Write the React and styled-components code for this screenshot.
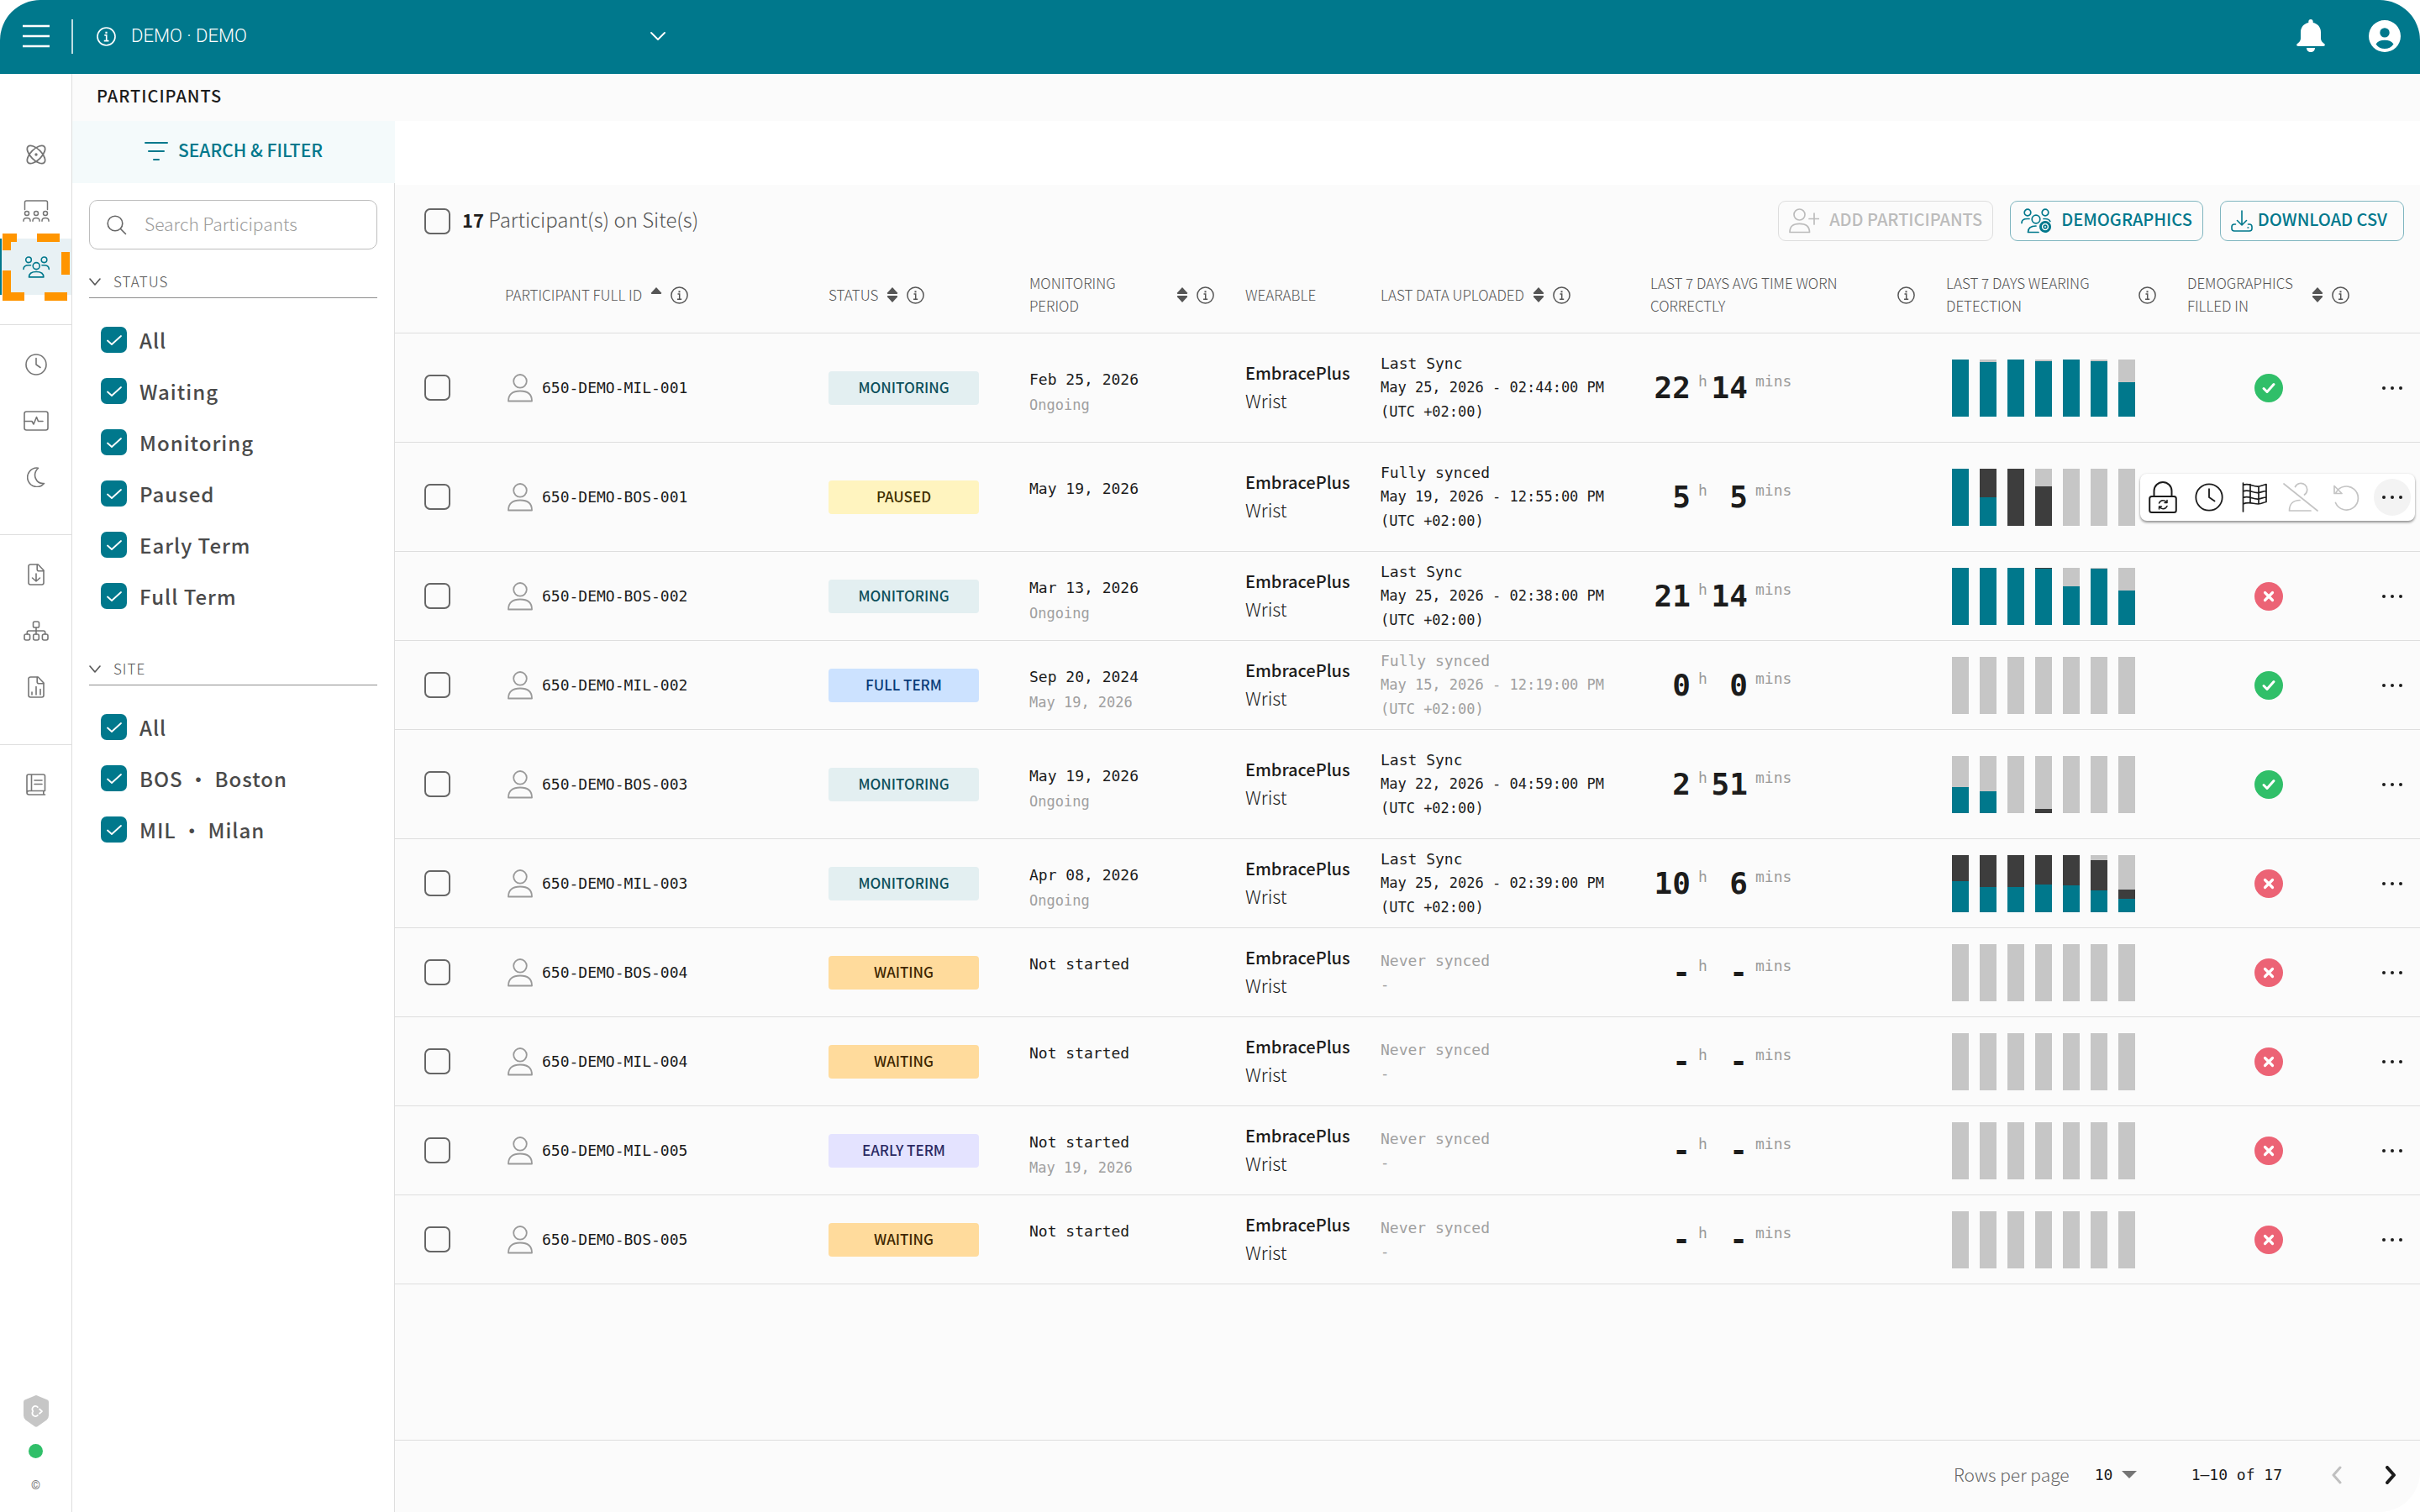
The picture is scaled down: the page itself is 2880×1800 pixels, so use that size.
import React from "react";
import styled, { createGlobalStyle } from "styled-components";

const teal = "#00788c";
const ink = "#1c1c1c";
const line = "#dedede";
const sans = `"Noto Sans CJK SC", Roboto, sans-serif`;
const mono = `"DejaVu Sans Mono", "Liberation Mono", monospace`;

const GlobalStyle = createGlobalStyle`
  *, *::before, *::after { box-sizing: border-box; }
  body { margin: 0; background: #fff; color: ${ink}; font-family: ${sans}; }
  button, select, input { font: inherit; color: inherit; margin: 0; }
  button { border: 0; padding: 0; background: none; cursor: pointer; }
  svg { display: block; flex: none; }
`;

/* ---------- icons ---------- */

const Svg = ({ w, h, sw = 2, fill = "none", children }) => (
  <svg
    width={w}
    height={h}
    viewBox={`0 0 ${w} ${h}`}
    fill={fill}
    stroke={fill === "none" ? "currentColor" : "none"}
    strokeWidth={sw}
    strokeLinecap="round"
    strokeLinejoin="round"
    aria-hidden="true"
  >
    {children}
  </svg>
);

const InfoIcon = ({ size = 21 }) => (
  <svg width={size} height={size} viewBox="0 0 21 21" fill="none" stroke="currentColor" strokeWidth="1.5" aria-hidden="true">
    <circle cx="10.5" cy="10.5" r="9.6" />
    <path d="M8.5 9h2.2v6M8 15.2h5.2" />
    <path d="M10.5 5.3v2" strokeWidth="2" />
  </svg>
);
const Chevron = ({ w = 18, h = 10, sw = 2 }) => (
  <Svg w={w} h={h} sw={sw}>
    <path d={`M1 1l${w / 2 - 1} ${h - 2}l${w / 2 - 1} ${2 - h}`} />
  </Svg>
);
const MenuIcon = () => (
  <Svg w={34} h={28} sw={2.4}>
    <path d="M1 2h32M1 14h32M1 26h32" strokeLinecap="butt" />
  </Svg>
);
const BellIcon = () => (
  <Svg w={34} h={40} fill="currentColor">
    <path d="M17 0c1.700 0 2.700 1.200 2.700 2.800v1.300c5.500 1.200 9.300 5.300 9.300 11.200v7.200c0 2.300.8 3.600 2.200 4.900l1.800 1.600c1.600 1.500.8 3-1.100 3H2.100c-1.900 0-2.700-1.500-1.100-3l1.800-1.600C4.200 26.100 5 24.800 5 22.500v-7.200C5 9.400 8.800 5.300 14.300 4.100V2.800C14.300 1.200 15.300 0 17 0z" />
    <path d="M12 34h10c0 3-2.200 5-5 5s-5-2-5-5z" />
  </Svg>
);
const UserIcon = () => (
  <Svg w={38} h={38} fill="currentColor">
    <path
      fillRule="evenodd"
      d="M19 0a19 19 0 1 1 0 38a19 19 0 0 1 0-38zM19 9.200a5.700 5.700 0 1 0 0 11.400a5.700 5.700 0 0 0 0-11.400zM8.500 28.400C11 32 14.700 34 19 34s8-2 10.500-5.600C27.300 25.200 23.500 23.800 19 23.800s-8.300 1.400-10.500 4.600z"
    />
  </Svg>
);
const AtomIcon = () => (
  <Svg w={24} h={24} sw={1.8}>
    <ellipse cx="12" cy="12" rx="13.600" ry="6.400" transform="rotate(45 12 12)" />
    <ellipse cx="12" cy="12" rx="13.600" ry="6.400" transform="rotate(-45 12 12)" />
    <circle cx="12" cy="12" r="0.800" fill="currentColor" />
  </Svg>
);
const BoardIcon = () => (
  <Svg w={32} h={26} sw={1.5}>
    <path d="M2.500 11.500V3q0-2 2-2h23q2 0 2 2v8.500" />
    {[5, 16, 27].map((x) => (
      <g key={x}>
        <circle cx={x} cy="16" r="2.500" />
        <path d={`M${x - 4} 25.200v-.5q0-3.200 4-3.200t4 3.200v.5`} />
      </g>
    ))}
  </Svg>
);
const GroupIcon = () => (
  <Svg w={32} h={26} sw={1.6}>
    <circle cx="7" cy="4.300" r="3.300" />
    <circle cx="25.500" cy="4.300" r="3.300" />
    <circle cx="16.200" cy="11.600" r="4" />
    <path d="M1 15.500c0-3.500 2.500-4.700 6-4.700h2.500M31.300 15.500c0-3.500-2.500-4.700-6-4.700H23" />
    <path d="M7.500 24.900c0-4.800 3.500-6.400 8.700-6.400s8.700 1.600 8.700 6.400z" />
  </Svg>
);
const ClockIcon = ({ s = 26, sw = 1.6 }) => (
  <svg width={s} height={s} viewBox="0 0 26 26" fill="none" stroke="currentColor" strokeWidth={sw} strokeLinecap="round" strokeLinejoin="round" aria-hidden="true">
    <circle cx="13" cy="13" r="12" />
    <path d="M13 5.500V13l5 3.500" />
  </svg>
);
const PulseIcon = () => (
  <Svg w={30} h={24} sw={1.6}>
    <rect x="1" y="1" width="28" height="22" rx="2.500" />
    <path d="M1 12.500h9l2 3.500 3.500-8.500 2 5H23" />
  </Svg>
);
const MoonIcon = () => (
  <Svg w={22} h={24} sw={1.6}>
    <path d="M13.500 1.200A11.200 11.200 0 1 0 20.500 19.500C11 20.500 5.500 9 13.500 1.200z" />
  </Svg>
);
const FileIcon = ({ children }) => (
  <Svg w={20} h={26} sw={1.6}>
    <path d="M3.500 1h8.800L19 8v14.800q0 2.200-2.200 2.200H3.200Q1 25 1 22.800V3.200Q1 1 3.500 1z" />
    <path d="M11.200 1.200v5.600q0 2 2 2h5.600" />
    {children}
  </Svg>
);
const OrgIcon = () => (
  <Svg w={30} h={24} sw={1.6}>
    <rect x="11.500" y="1" width="7" height="7" rx="1.800" />
    <rect x="1" y="16" width="6.600" height="7" rx="2" />
    <rect x="11.700" y="16" width="6.600" height="7" rx="2" />
    <rect x="22.400" y="16" width="6.600" height="7" rx="2" />
    <path d="M15 8v8M4.300 16v-2.200q0-1.800 1.800-1.800h17.800q1.800 0 1.800 1.800V16" />
  </Svg>
);
const BookIcon = () => (
  <Svg w={24} h={26} sw={1.600}>
    <path d="M22.500 20.500V3q0-2-2-2H3Q1 1 1 3v19.500Q1 25 3.500 25h19M1 23q0-2.500 2.500-2.500h19M6.500 1v19.500M10 8h9M10 12.500h9M20.800 20.500V25" />
  </Svg>
);
const ShieldIcon = () => (
  <Svg w={30} h={38} fill="#c6c6c6">
    <path d="M15 0Q16 .2 17 .8L28.500 5.500Q30 6.200 30 8v16q0 3.500-2.500 5.500L16.500 37.200q-1.500.9-3 0L2.500 29.500Q0 27.500 0 24V8Q0 6.200 1.500 5.500L13 .8Q14 .2 15 0z" />
    <path d="M16.800 14.200a3.600 3.600 0 1 0-5.500 4.800a3.600 3.600 0 1 0 5.500 4.800M19 16.500l3 2.600-3 2.600" fill="none" stroke="#fff" strokeWidth="1.800" />
  </Svg>
);
const FilterIcon = () => (
  <Svg w={28} h={24} sw={2}>
    <path d="M1 2h26M5 12h18M11 22h6" />
  </Svg>
);
const SearchIcon = () => (
  <Svg w={24} h={24} sw={1.6}>
    <circle cx="10" cy="10" r="8.800" />
    <path d="M16.500 16.500l6 6" />
  </Svg>
);
const CheckMark = () => (
  <Svg w={18} h={12} sw={1.8}>
    <path d="M1 6.500L6 11 17 1" />
  </Svg>
);
const PersonIcon = () => (
  <Svg w={30} h={34} sw={1.8}>
    <circle cx="15" cy="8.800" r="7.800" />
    <path d="M1 32.500c0-8 5-12 14-12s14 4 14 12z" />
  </Svg>
);
const AddPersonIcon = () => (
  <Svg w={36} h={30} sw={1.7}>
    <circle cx="12.500" cy="7.500" r="6.500" />
    <path d="M1 28.500C1 21 5 18.300 12.500 18.300S24.500 21 24.500 28.500zM30 6v13M24 12.500h12" />
  </Svg>
);
const DemographicsIcon = () => (
  <Svg w={36} h={30} sw={1.7}>
    <circle cx="8" cy="5" r="3.800" />
    <circle cx="29" cy="5" r="3.800" />
    <circle cx="18" cy="13" r="4.800" />
    <path d="M1 17.500c0-3.500 2.500-5 6.500-5h2.500M27 12.500h2c3 0 5 1.200 5.800 3M21 28.500H8.500c0-5 3-7.500 9.500-7.500" />
    <circle cx="29" cy="22" r="5.800" strokeWidth="2.400" strokeDasharray="3.200 1.350" />
    <circle cx="29" cy="22" r="5" />
    <circle cx="29" cy="22" r="1.800" />
  </Svg>
);
const DownloadIcon = () => (
  <Svg w={26} h={26} sw={1.6}>
    <path d="M13 1v17M7.500 12.500L13 18l5.500-5.500M5.500 17H4q-3 0-3 3v2q0 3 3 3h18q3 0 3-3v-2q0-3-3-3h-1.500M20 21h.8" />
  </Svg>
);
const SortIcon = ({ dir }) => (
  <Svg w={14} h={18} fill="currentColor">
    <path d="M7 0l6 6.500q.5 1.500-.8 1.500H1.800Q.5 8 1 6.500z" />
    {dir !== "up" && <path d="M7 18l6-6.500q.5-1.500-.8-1.500H1.800Q.5 10 1 11.500z" />}
  </Svg>
);
const LockIcon = () => (
  <Svg w={34} h={38} sw={2}>
    <path d="M6.500 18V11.500a10.500 10.500 0 0 1 21 0V18" />
    <rect x="1.200" y="18" width="31.600" height="19" rx="2.500" />
    <path d="M12.500 26q1.500-3.500 5-3.200 2.300.1 4 2.200M22 22.500v3h-3M22 29.500q-1.500 3.500-5 3.200-2.300-.1-4-2.200M12.500 33v-3h3" strokeWidth="1.500" />
  </Svg>
);
const FlagIcon = () => (
  <Svg w={30} h={36} sw={1.7}>
    <path d="M1.500 1v34M1.500 3.500c7-3.500 12 3 19 1.500 3-.7 6-2 8.500-2.500v21c-3 .5-5.500 2.500-9.500 2.500-6 0-11-3.500-18 0M1.500 11c7-3.500 12 3 19 1.500 3-.7 6-2 8.500-2M1.500 18.500c7-3.500 12 3 19 1.500 3-.7 6-2 8.500-2M10 2.500v22M20 5v21" />
  </Svg>
);
const NoPersonIcon = () => (
  <Svg w={42} h={36} sw={1.700}>
    <path d="M1 2l40 32M14.500 5.500a7.500 7.500 0 1 1 11 9.500M20 21.500C12 21.500 7.500 26 7.500 34H33" />
  </Svg>
);
const UndoIcon = () => (
  <Svg w={32} h={32} sw={1.7}>
    <path d="M4 10.500A14 14 0 1 1 3.500 22.500M2 2.500v9h9z" />
  </Svg>
);
const DotsIcon = () => (
  <Svg w={26} h={6} fill={ink}>
    <circle cx="3" cy="3" r="2" />
    <circle cx="13" cy="3" r="2" />
    <circle cx="23" cy="3" r="2" />
  </Svg>
);
const YesIcon = () => (
  <svg width="34" height="34" viewBox="0 0 34 34" role="img" aria-label="Filled in">
    <circle cx="17" cy="17" r="17" fill="#30bf69" />
    <path d="M11 17.500l4 4 8-9" fill="none" stroke="#fff" strokeWidth="3" strokeLinecap="round" strokeLinejoin="round" />
  </svg>
);
const NoIcon = () => (
  <svg width="34" height="34" viewBox="0 0 34 34" role="img" aria-label="Not filled in">
    <circle cx="17" cy="17" r="17" fill="#ec6375" />
    <path d="M12.500 12.500l9 9M21.500 12.500l-9 9" stroke="#fff" strokeWidth="3.200" strokeLinecap="round" />
  </svg>
);
const DashedFrame = () => (
  <svg width="82" height="80" viewBox="0 0 82 80" fill="#ff9500" aria-hidden="true">
    <path d="M0 0h17v10h-7v10H0zM41 0h27v10H41zM70 22h10v27H70zM0 44h10v26h16v10H0zM50 70h27v10H50z" />
  </svg>
);

/* ---------- shell ---------- */

const Shell = styled.div`
  min-height: 100vh;
  display: flex;
  flex-direction: column;
  overflow: hidden;
  border-radius: 48px;
  background: #fff;
`;
const TopBar = styled.header`
  height: 88px;
  display: flex;
  align-items: center;
  padding: 0 23px 2px 26px;
  background: ${teal};
  color: #fff;
`;
const MenuButton = styled.button`
  padding-right: 25px;
`;
const ProjectPicker = styled.label`
  display: grid;
  grid-template-columns: 39px 638px;
  align-items: center;
  height: 41px;
  padding-left: 28px;
  border-left: 2px solid rgba(255, 255, 255, 0.75);
  & > svg { pointer-events: none; }
  & > svg:last-child { grid-area: 1 / 2; justify-self: end; }
`;
const ProjectSelect = styled.select`
  grid-area: 1 / 2;
  appearance: none;
  border: 0;
  outline: 0;
  padding: 0 32px 0 2px;
  background: transparent;
  font-family: Roboto, sans-serif;
  font-size: 22px;
  line-height: 32px;
  font-weight: 300;
`;
const TopActions = styled.div`
  margin-left: auto;
  display: flex;
  align-items: center;
  gap: 52px;
`;
const Body = styled.div`
  flex: 1;
  display: grid;
  grid-template-columns: 86px minmax(0, 1fr);
`;

const Rail = styled.nav`
  display: flex;
  flex-direction: column;
  align-items: stretch;
  border-right: 1px solid ${line};
  color: #757575;
`;
const RailGroup = styled.div`
  padding: ${(p) => (p.$first ? "62px 0 35px" : "13px 0 35px")};
  border-bottom: ${(p) => (p.$last ? "0" : `1px solid ${line}`)};
`;
const RailLink = styled.a`
  position: relative;
  display: flex;
  align-items: center;
  justify-content: center;
  height: 67px;
  color: ${(p) => (p.$active ? teal : "inherit")};
  background: ${(p) => (p.$active ? "#e8f1f4" : "transparent")};
  box-shadow: ${(p) => (p.$active ? `inset 2px 0 0 ${teal}` : "none")};
`;
const Highlight = styled.span`
  position: absolute;
  left: 3px;
  top: -6px;
`;
const RailFooter = styled.div`
  margin-top: auto;
  display: flex;
  flex-direction: column;
  align-items: center;
  gap: 20px;
  padding-bottom: 20px;
  font: 14px/24px Roboto, sans-serif;
`;
const OnlineDot = styled.span`
  width: 17px;
  height: 17px;
  border-radius: 50%;
  background: #30bf69;
`;

const Main = styled.main`
  display: flex;
  flex-direction: column;
  min-width: 0;
`;
const PageTitle = styled.h1`
  margin: 0;
  height: 56px;
  padding-left: 29px;
  background: #fbfbfb;
  font-size: 20px;
  line-height: 52px;
  font-weight: 500;
  letter-spacing: 1px;
`;
const Columns = styled.div`
  flex: 1;
  display: grid;
  grid-template-columns: 384px minmax(0, 1fr);
`;

/* ---------- filter panel ---------- */

/* The sans face sits low in its line box; the padding lifts it onto the icon's centre line. */
const Caption = styled.span`
  padding-bottom: 4px;
`;
const FilterPanel = styled.aside`
  display: flex;
  flex-direction: column;
  border-right: 1px solid ${line};
`;
const FilterTab = styled.button`
  display: flex;
  align-items: center;
  justify-content: center;
  gap: 12px;
  height: 74px;
  margin-right: -1px;
  padding-bottom: 2px;
  background: #f4fafb;
  color: ${teal};
  font-size: 21px;
  line-height: 32px;
  font-weight: 500;
`;
const SearchBox = styled.label`
  display: flex;
  align-items: center;
  gap: 21px;
  height: 59px;
  margin: 20px 20px 19px;
  padding: 0 20px;
  border: 1px solid #bdbdbd;
  border-radius: 10px;
  color: #666;
`;
const SearchInput = styled.input`
  flex: 1;
  min-width: 0;
  border: 0;
  outline: 0;
  padding: 0 0 4px;
  background: transparent;
  font-size: 21px;
  line-height: 32px;
  font-weight: 300;
  color: ${ink};
  &::placeholder { color: #9a9a9a; opacity: 1; }
`;
const FilterGroup = styled.fieldset`
  margin: 0 20px 37px;
  padding: 0;
  border: 0;
  min-width: 0;
`;
const FilterHeading = styled.legend`
  display: flex;
  align-items: center;
  gap: 15px;
  width: 100%;
  height: 39px;
  padding: 0;
  margin-bottom: 19px;
  border-bottom: 1px solid #8c8c8c;
  color: #555;
  font-size: 17px;
  line-height: 24px;
  font-weight: 300;
  letter-spacing: 1px;
`;
const FilterOption = styled.label`
  display: flex;
  align-items: center;
  gap: 15px;
  height: 61px;
  padding-left: 14px;
  color: #4a4a4a;
  font-size: 24px;
  line-height: 32px;
  font-weight: 500;
  letter-spacing: 1px;
`;
const CheckWrap = styled.span`
  display: inline-grid;
  place-items: center;
  vertical-align: middle;
  color: #fff;
  & > * { grid-area: 1 / 1; }
  & > svg { pointer-events: none; }
`;
const Check = styled.input`
  appearance: none;
  width: 31px;
  height: 31px;
  border: 2px solid #666;
  border-radius: 7px;
  background: transparent;
  &:checked { border-color: ${teal}; background: ${teal}; }
`;

/* ---------- content ---------- */

const Content = styled.section`
  display: flex;
  flex-direction: column;
  min-width: 0;
  margin-top: 76px;
  background: #fbfbfb;
`;
const Toolbar = styled.div`
  display: flex;
  align-items: center;
  gap: 20px;
  height: 86px;
  padding: 0 19px 0 35px;
`;
const Count = styled.label`
  display: flex;
  align-items: center;
  gap: 14px;
  margin-right: auto;
  color: #555;
  font-size: 24px;
  line-height: 36px;
  font-weight: 300;
  b { color: ${ink}; font-size: 22px; font-weight: 700; }
`;
const ActionButton = styled.button`
  display: flex;
  align-items: center;
  gap: ${(p) => (p.$tight ? "6px" : "12px")};
  height: 48px;
  padding: ${(p) => (p.$tight ? "0 19px 0 12px" : "0 12px")};
  border: 1px solid #7fb5bf;
  border-radius: 9px;
  color: ${teal};
  font-size: 20px;
  line-height: 32px;
  font-weight: 500;
  &:disabled { color: #bcbcbc; border-color: ${line}; }
`;

const Table = styled.table`
  width: 100%;
  table-layout: fixed;
  border-collapse: separate;
  border-spacing: 0;
`;
const Th = styled.th`
  height: 91px;
  padding: 0;
  border-bottom: 1px solid ${line};
  text-align: left;
  color: #555;
  font-size: 17px;
  line-height: 27px;
  font-weight: 300;
`;
const HeadFlex = styled.div`
  display: flex;
  align-items: center;
  gap: 10px;
  padding-right: ${(p) => (p.$wrap ? "37px" : "0")};
  & > span { flex: ${(p) => (p.$wrap ? "1" : "none")}; padding-bottom: 2px; }
`;
const Td = styled.td`
  position: relative;
  height: ${(p) => (p.$tall ? "130px" : "106px")};
  padding: 0 0 0 ${(p) => p.$pad || 0}px;
  border-bottom: 1px solid ${line};
`;
const Identity = styled.div`
  display: flex;
  align-items: center;
  gap: 11px;
  padding-left: 3px;
  color: #9a9a9a;
  span { color: ${ink}; font: 18px/28px ${mono}; }
`;
const badgeTones = {
  MONITORING: ["#e3eff1", "#0c4f5b"],
  PAUSED: ["#fff4bf", "#3f3000"],
  "FULL TERM": ["#cce2ff", "#073a78"],
  WAITING: ["#ffdb9c", "#3f2700"],
  "EARLY TERM": ["#e4e3ff", "#2b2a63"],
};
const Badge = styled.span`
  display: block;
  width: 179px;
  padding-bottom: 2px;
  border-radius: 4px;
  background: ${(p) => badgeTones[p.$tone][0]};
  color: ${(p) => badgeTones[p.$tone][1]};
  text-align: center;
  font-size: 17px;
  line-height: 38px;
  font-weight: 500;
`;
const Period = styled.div`
  height: 60px;
  margin-top: 10px;
  font: 18px/30px ${mono};
`;
const Muted = styled.div`
  color: #a0a0a0;
  font-size: 17px;
`;
const Wearable = styled.div`
  padding-bottom: 4px;
  font-size: 22px;
  line-height: 32px;
  font-weight: 300;
  b { display: block; font-size: 20px; font-weight: 500; }
`;
const Sync = styled.div`
  color: ${(p) => (p.$muted ? "#a0a0a0" : ink)};
  font: 17px/29px ${mono};
  strong { display: block; font-size: 18px; font-weight: 400; }
  span { display: block; }
`;
const Worn = styled.div`
  display: flex;
  align-items: flex-start;
  font: 18px/24px ${mono};
  color: #9a9a9a;
  b {
    width: 48px;
    text-align: right;
    font-size: 36px;
    line-height: 40px;
    font-weight: 700;
    color: ${ink};
  }
  span { width: 20px; text-align: right; }
  span:last-child { width: auto; padding-left: 9px; }
`;
const Bars = styled.div`
  display: flex;
  gap: 13px;
  height: 68px;
`;
const Bar = styled.div`
  display: flex;
  flex-direction: column;
  justify-content: flex-end;
  width: 20px;
  background: #c6c6c6;
`;
const Segment = styled.div`
  background: ${(p) => (p.$worn ? teal : "#3d3d3d")};
`;
const Centered = styled.div`
  display: flex;
  justify-content: center;
  padding-right: 36px;
`;
const RowMenuButton = styled.button`
  display: flex;
  align-items: center;
  justify-content: center;
  width: 28px;
  height: 44px;
`;
const ActionsMenu = styled.div`
  position: absolute;
  z-index: 1;
  right: 6px;
  top: calc(50% - 28px);
  display: grid;
  grid-template-columns: repeat(6, 1fr);
  align-items: center;
  justify-items: center;
  width: 327px;
  height: 56px;
  border-radius: 8px;
  background: #fff;
  box-shadow: 0 2px 3px rgba(0, 0, 0, 0.4), 0 0 3px rgba(0, 0, 0, 0.08);
`;
const MenuItem = styled.button`
  display: flex;
  align-items: center;
  justify-content: center;
  width: 44px;
  height: 44px;
  border-radius: 50%;
  background: ${(p) => (p.$open ? "#f3f3f3" : "transparent")};
  &:disabled { color: #c4c4c4; }
`;

const Pager = styled.footer`
  display: flex;
  align-items: center;
  justify-content: flex-end;
  height: 86px;
  margin-top: auto;
  padding-right: 28px;
  padding-bottom: 4px;
  border-top: 1px solid ${line};
  font: 18px/28px ${mono};
`;
const PageSize = styled.label`
  display: grid;
  grid-template-columns: auto 50px;
  align-items: center;
  column-gap: 30px;
  margin-right: 65px;
  color: #666;
  & > svg { grid-area: 1 / 2; justify-self: end; pointer-events: none; }
`;
const PageSizeText = styled.span`
  padding-bottom: 2px;
  font: 300 21px/32px ${sans};
`;
const PageSizeSelect = styled.select`
  grid-area: 1 / 2;
  appearance: none;
  border: 0;
  outline: 0;
  padding: 0;
  background: transparent;
  color: ${ink};
`;
const PageArrow = styled.button`
  display: flex;
  margin-left: ${(p) => (p.$prev ? "58px" : "52px")};
  &:disabled { color: #c0c0c0; }
`;

/* ---------- data ---------- */

const statusFilters = ["All", "Waiting", "Monitoring", "Paused", "Early Term", "Full Term"];
const siteFilters = ["All", "BOS · Boston", "MIL · Milan"];
const none = [[0], [0], [0], [0], [0], [0], [0]];

// Each bar is [worn, worn incorrectly], in percent of the day.
const rows = [
  { id: "650-DEMO-MIL-001", status: "MONITORING", start: "Feb 25, 2026", end: "Ongoing", sync: "Last Sync", at: "May 25, 2026 - 02:44:00 PM", h: 22, m: 14, bars: [[99], [95], [99], [97], [100], [97], [60]], filled: true, tall: true },
  { id: "650-DEMO-BOS-001", status: "PAUSED", start: "May 19, 2026", sync: "Fully synced", at: "May 19, 2026 - 12:55:00 PM", h: 5, m: 5, bars: [[100], [49, 51], [0, 100], [0, 69], [0], [0], [0]], filled: false, tall: true, open: true },
  { id: "650-DEMO-BOS-002", status: "MONITORING", start: "Mar 13, 2026", end: "Ongoing", sync: "Last Sync", at: "May 25, 2026 - 02:38:00 PM", h: 21, m: 14, bars: [[99], [99], [99, 1], [98, 2], [67], [98], [60]], filled: false },
  { id: "650-DEMO-MIL-002", status: "FULL TERM", start: "Sep 20, 2024", end: "May 19, 2026", sync: "Fully synced", at: "May 15, 2026 - 12:19:00 PM", muted: true, h: 0, m: 0, bars: none, filled: true },
  { id: "650-DEMO-BOS-003", status: "MONITORING", start: "May 19, 2026", end: "Ongoing", sync: "Last Sync", at: "May 22, 2026 - 04:59:00 PM", h: 2, m: 51, bars: [[45], [38], [0], [0, 6], [0], [0], [0]], filled: true, tall: true },
  { id: "650-DEMO-MIL-003", status: "MONITORING", start: "Apr 08, 2026", end: "Ongoing", sync: "Last Sync", at: "May 25, 2026 - 02:39:00 PM", h: 10, m: 6, bars: [[53, 47], [44, 56], [43, 57], [48, 52], [47, 53], [37, 54], [23, 16]], filled: false },
  { id: "650-DEMO-BOS-004", status: "WAITING", start: "Not started", sync: "Never synced", muted: true, h: "-", m: "-", bars: none, filled: false },
  { id: "650-DEMO-MIL-004", status: "WAITING", start: "Not started", sync: "Never synced", muted: true, h: "-", m: "-", bars: none, filled: false },
  { id: "650-DEMO-MIL-005", status: "EARLY TERM", start: "Not started", end: "May 19, 2026", sync: "Never synced", muted: true, h: "-", m: "-", bars: none, filled: false },
  { id: "650-DEMO-BOS-005", status: "WAITING", start: "Not started", sync: "Never synced", muted: true, h: "-", m: "-", bars: none, filled: false },
];

const columnWidths = [131, 385, 239, 257, 161, 321, 352, 287, 230, 47];

/* ---------- parts ---------- */

const CheckBox = (props) => (
  <CheckWrap>
    <Check type="checkbox" {...props} />
    {props.defaultChecked && <CheckMark />}
  </CheckWrap>
);

const Filters = ({ title, options }) => (
  <FilterGroup>
    <FilterHeading>
      <Chevron w={14} h={9} sw={1.6} />
      {title}
    </FilterHeading>
    {options.map((option) => (
      <FilterOption key={option}>
        <CheckBox defaultChecked />
        {option}
      </FilterOption>
    ))}
  </FilterGroup>
);

const Heading = ({ children, sort, info, wrap }) => (
  <Th scope="col">
    <HeadFlex $wrap={wrap}>
      <span>{children}</span>
      {sort && <SortIcon dir={sort} />}
      {info && <InfoIcon />}
    </HeadFlex>
  </Th>
);

const Row = ({ row }) => (
  <tr>
    <Td $tall={row.tall} $pad={35}>
      <CheckBox aria-label={`Select ${row.id}`} />
    </Td>
    <Td>
      <Identity>
        <PersonIcon />
        <span>{row.id}</span>
      </Identity>
    </Td>
    <Td>
      <Badge $tone={row.status}>{row.status}</Badge>
    </Td>
    <Td>
      <Period>
        {row.start}
        {row.end && <Muted>{row.end}</Muted>}
      </Period>
    </Td>
    <Td>
      <Wearable>
        <b>EmbracePlus</b>
        Wrist
      </Wearable>
    </Td>
    <Td>
      <Sync $muted={row.muted}>
        <strong>{row.sync}</strong>
        <span>{row.at || "-"}</span>
        {row.at && <span>(UTC +02:00)</span>}
      </Sync>
    </Td>
    <Td>
      <Worn>
        <b>{row.h}</b>
        <span>h</span>
        <b>{row.m}</b>
        <span>mins</span>
      </Worn>
    </Td>
    <Td $pad={7}>
      <Bars>
        {row.bars.map(([worn, wrong = 0], i) => (
          <Bar key={i}>
            <Segment style={{ height: `${wrong}%` }} />
            <Segment $worn style={{ height: `${worn}%` }} />
          </Bar>
        ))}
      </Bars>
    </Td>
    <Td>
      <Centered>{row.filled ? <YesIcon /> : <NoIcon />}</Centered>
    </Td>
    <Td>
      {row.open ? (
        <ActionsMenu>
          <MenuItem aria-label="Reset lock"><LockIcon /></MenuItem>
          <MenuItem aria-label="History"><ClockIcon s={34} sw={1.4} /></MenuItem>
          <MenuItem aria-label="Complete"><FlagIcon /></MenuItem>
          <MenuItem aria-label="Remove participant" disabled><NoPersonIcon /></MenuItem>
          <MenuItem aria-label="Undo" disabled><UndoIcon /></MenuItem>
          <MenuItem aria-label="Close menu" $open><DotsIcon /></MenuItem>
        </ActionsMenu>
      ) : (
        <RowMenuButton aria-label={`Actions for ${row.id}`}><DotsIcon /></RowMenuButton>
      )}
    </Td>
  </tr>
);

export default function App() {
  return (
    <>
      <GlobalStyle />
      <Shell>
        <TopBar>
          <MenuButton aria-label="Menu"><MenuIcon /></MenuButton>
          <ProjectPicker>
            <InfoIcon size={23} />
            <ProjectSelect aria-label="Study">
              <option>DEMO · DEMO</option>
            </ProjectSelect>
            <Chevron w={18} h={10} sw={1.8} />
          </ProjectPicker>
          <TopActions>
            <button aria-label="Notifications"><BellIcon /></button>
            <button aria-label="Account"><UserIcon /></button>
          </TopActions>
        </TopBar>
        <Body>
          <Rail aria-label="Main">
            <RailGroup $first>
              <RailLink href="#studies" aria-label="Studies"><AtomIcon /></RailLink>
              <RailLink href="#sites" aria-label="Sites"><BoardIcon /></RailLink>
              <RailLink href="#participants" aria-label="Participants" $active>
                <GroupIcon />
                <Highlight><DashedFrame /></Highlight>
              </RailLink>
            </RailGroup>
            <RailGroup>
              <RailLink href="#adherence" aria-label="Adherence"><ClockIcon /></RailLink>
              <RailLink href="#signals" aria-label="Signals"><PulseIcon /></RailLink>
              <RailLink href="#sleep" aria-label="Sleep"><MoonIcon /></RailLink>
            </RailGroup>
            <RailGroup>
              <RailLink href="#exports" aria-label="Exports">
                <FileIcon><path d="M10 12v9M5.500 17l4.500 4 4.500-4" /></FileIcon>
              </RailLink>
              <RailLink href="#organization" aria-label="Organization"><OrgIcon /></RailLink>
              <RailLink href="#reports" aria-label="Reports">
                <FileIcon><path d="M5 19v3M10 12.500V22M15 15.500V22" /></FileIcon>
              </RailLink>
            </RailGroup>
            <RailGroup $last>
              <RailLink href="#manual" aria-label="Manual"><BookIcon /></RailLink>
            </RailGroup>
            <RailFooter>
              <ShieldIcon />
              <OnlineDot />
              <span>©</span>
            </RailFooter>
          </Rail>
          <Main>
            <PageTitle>PARTICIPANTS</PageTitle>
            <Columns>
              <FilterPanel>
                <FilterTab>
                  <FilterIcon />
                  <Caption>SEARCH &amp; FILTER</Caption>
                </FilterTab>
                <SearchBox>
                  <SearchIcon />
                  <SearchInput type="search" placeholder="Search Participants" aria-label="Search Participants" />
                </SearchBox>
                <Filters title="STATUS" options={statusFilters} />
                <Filters title="SITE" options={siteFilters} />
              </FilterPanel>
              <Content>
                <Toolbar>
                  <Count>
                    <CheckBox />
                    <Caption><b>17</b> Participant(s) on Site(s)</Caption>
                  </Count>
                  <ActionButton disabled><AddPersonIcon /><Caption>ADD PARTICIPANTS</Caption></ActionButton>
                  <ActionButton><DemographicsIcon /><Caption>DEMOGRAPHICS</Caption></ActionButton>
                  <ActionButton $tight><DownloadIcon /><Caption>DOWNLOAD CSV</Caption></ActionButton>
                </Toolbar>
                <Table>
                  <colgroup>
                    {columnWidths.map((w, i) => (
                      <col key={i} style={{ width: `${(w / 2410) * 100}%` }} />
                    ))}
                  </colgroup>
                  <thead>
                    <tr>
                      <Th />
                      <Heading sort="up" info>PARTICIPANT FULL ID</Heading>
                      <Heading sort="both" info>STATUS</Heading>
                      <Heading sort="both" info wrap>MONITORING<br />PERIOD</Heading>
                      <Heading>WEARABLE</Heading>
                      <Heading sort="both" info>LAST DATA UPLOADED</Heading>
                      <Heading info wrap>LAST 7 DAYS AVG TIME WORN<br />CORRECTLY</Heading>
                      <Heading info wrap>LAST 7 DAYS WEARING<br />DETECTION</Heading>
                      <Heading sort="both" info wrap>DEMOGRAPHICS<br />FILLED IN</Heading>
                      <Th />
                    </tr>
                  </thead>
                  <tbody>
                    {rows.map((row) => (
                      <Row key={row.id} row={row} />
                    ))}
                  </tbody>
                </Table>
                <Pager>
                  <PageSize>
                    <PageSizeText>Rows per page</PageSizeText>
                    <PageSizeSelect>
                      <option>10</option>
                    </PageSizeSelect>
                    <Svg w={18} h={9} fill="#757575"><path d="M0 0h18L9 9z" /></Svg>
                  </PageSize>
                  <span>1–10 of 17</span>
                  <PageArrow $prev disabled aria-label="Previous page">
                    <Svg w={13} h={22} sw={3}><path d="M11 2L3 11l8 9" /></Svg>
                  </PageArrow>
                  <PageArrow aria-label="Next page">
                    <Svg w={13} h={22} sw={4}><path d="M2 2l8 9-8 9" /></Svg>
                  </PageArrow>
                </Pager>
              </Content>
            </Columns>
          </Main>
        </Body>
      </Shell>
    </>
  );
}
